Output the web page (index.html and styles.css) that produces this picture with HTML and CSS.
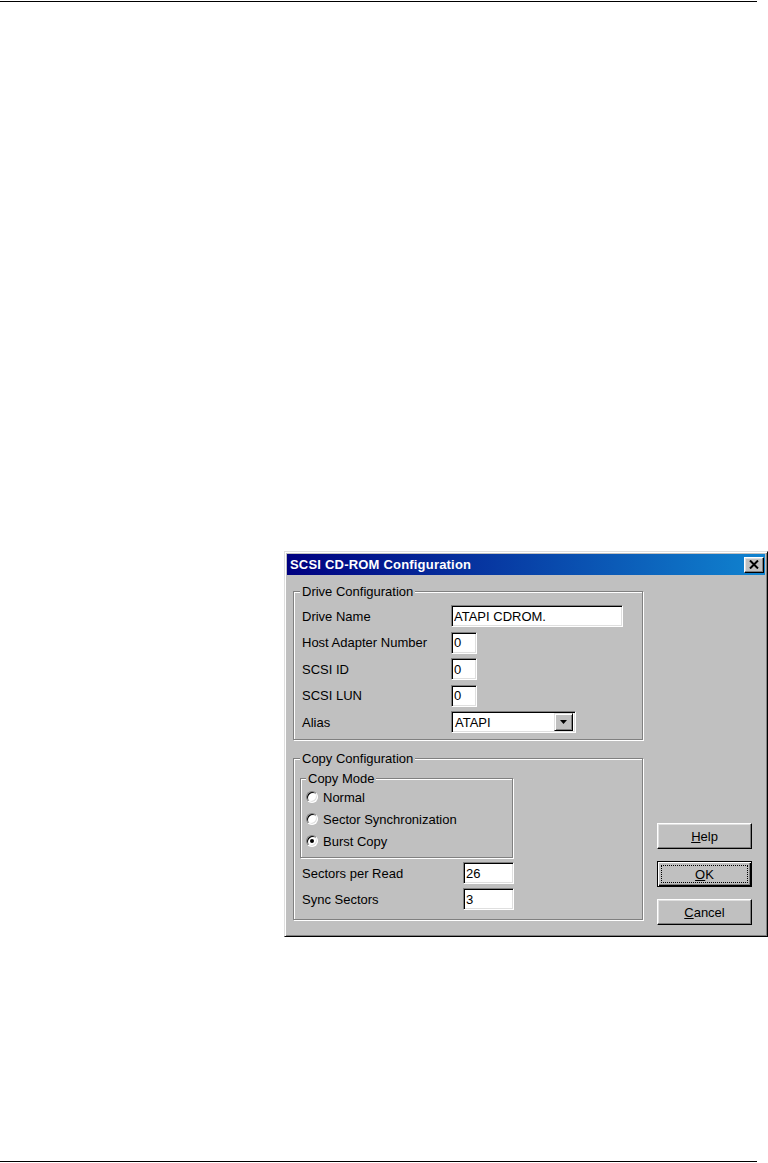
FILE: index.html
```html
<!DOCTYPE html>
<html lang="en-US">
<head>
<title>SCSI CD-ROM Configuration</title>
<link rel="stylesheet" href="styles.css">
</head>
<body>
<div class="page">
  <hr class="rule">

  <div class="dialog">
    <div class="titlebar">
      <span class="title">SCSI CD-ROM Configuration</span>
      <button class="close" type="button">
        <svg width="10" height="9" viewBox="0 0 10 9"><path d="M1 0.5 L9 8.5 M9 0.5 L1 8.5" stroke="#000" stroke-width="2" fill="none"/></svg>
      </button>
    </div>

    <div class="dialog-body">
      <div class="groups">
        <fieldset class="group drive">
          <legend>Drive Configuration</legend>
          <div class="rows">
            <div class="field"><label>Drive Name</label><input class="text" style="width:172px" value="ATAPI CDROM."></div>
            <div class="field"><label>Host Adapter Number</label><input class="text" style="width:26px" value="0"></div>
            <div class="field"><label>SCSI ID</label><input class="text" style="width:26px" value="0"></div>
            <div class="field"><label>SCSI LUN</label><input class="text" style="width:26px" value="0"></div>
            <div class="field">
              <label>Alias</label>
              <div class="combo">
                <span>ATAPI</span>
                <button class="combo-btn" type="button">
                  <svg width="7" height="4" viewBox="0 0 7 4"><polygon points="0,0 7,0 3.5,4" fill="#000"/></svg>
                </button>
              </div>
            </div>
          </div>
        </fieldset>

        <fieldset class="group copy">
          <legend>Copy Configuration</legend>
          <fieldset class="group mode">
            <legend>Copy Mode</legend>
            <div class="option"><span class="radio"></span>Normal</div>
            <div class="option"><span class="radio"></span>Sector Synchronization</div>
            <div class="option"><span class="radio checked"></span>Burst Copy</div>
          </fieldset>
          <div class="rows copy-rows">
            <div class="field"><label>Sectors per Read</label><input class="text" style="width:51px" value="26"></div>
            <div class="field"><label>Sync Sectors</label><input class="text" style="width:51px" value="3"></div>
          </div>
        </fieldset>
      </div>

      <div class="buttons">
        <button class="btn" type="button"><u>H</u>elp</button>
        <button class="btn default" type="button"><span class="focus"><u>O</u>K</span></button>
        <button class="btn" type="button"><u>C</u>ancel</button>
      </div>
    </div>
  </div>

  <hr class="rule">
</div>
</body>
</html>
```

FILE: styles.css
```css
html, body {
  margin: 0;
  background: #fff;
  overflow: hidden;
}
body {
  font-family: "Liberation Sans", Arial, sans-serif;
  font-size: 13px;
  color: #000;
}

.page {
  height: 1163px;
  display: flex;
  flex-direction: column;
}
.rule {
  width: 757px;
  height: 1px;
  margin: 1px 0 0 0;
  border: none;
  background: #000;
}
.rule:last-child {
  margin: auto 0 1px 0;
}

/* window */
.dialog {
  box-sizing: border-box;
  width: 484px;
  margin: 549px 0 0 284px;
  padding: 2px;
  background: #c0c0c0;
  border: 1px solid;
  border-color: #dfdfdf #000 #000 #dfdfdf;
  box-shadow: inset 1px 1px 0 #fff, inset -1px -1px 0 #808080;
}
.titlebar {
  height: 21px;
  display: flex;
  align-items: center;
  justify-content: space-between;
  padding: 0 1px 0 3px;
  background: linear-gradient(90deg, #000080, #1084d0);
}
.title {
  color: #fff;
  font-weight: bold;
  font-size: 13px;
  letter-spacing: 0.2px;
}
.close {
  width: 20px;
  height: 16px;
  padding: 0;
  display: flex;
  align-items: center;
  justify-content: center;
  background: #c0c0c0;
  border: 1px solid;
  border-color: #fff #000 #000 #fff;
  box-shadow: inset -1px -1px 0 #808080, inset 1px 1px 0 #dfdfdf;
}

.dialog-body {
  display: flex;
  align-items: flex-end;
  padding: 9px 13px 9px 6px;
}
.groups {
  width: 350px;
  margin: 0 14px 5px 0;
}

/* group boxes */
.group {
  box-sizing: border-box;
  min-width: 0;
  margin: 0;
  padding: 0;
  border: 1px solid #808080;
  box-shadow: 1px 1px 0 #fff, inset 1px 1px 0 #fff;
}
.group legend {
  margin-left: 6px;
  padding: 0 2px;
  line-height: 15px;
  background: #c0c0c0;
}
.drive {
  width: 350px;
}
.drive .rows {
  padding: 6px 0 6px 8px;
}
.copy {
  width: 350px;
  margin-top: 11px;
  padding: 5px 0 0 0;
}
.mode {
  width: 213px;
  margin-left: 6px;
  padding: 0 0 5px 5px;
}
.mode legend {
  margin-left: 0;
}
.copy-rows {
  padding: 4px 0 9px 8px;
}

.rows {
  display: flex;
  flex-direction: column;
  gap: 4.5px;
}
.copy-rows {
  gap: 4px;
}
.field {
  height: 22px;
  display: flex;
  align-items: center;
}
.field label {
  width: 149px;
  flex: none;
}
.copy-rows .field label {
  width: 161px;
}

/* inputs */
.text {
  box-sizing: border-box;
  height: 22px;
  margin: 0;
  padding: 0 2px;
  font: inherit;
  color: #000;
  background: #fff;
  border: 1px solid;
  border-color: #808080 #fff #fff #808080;
  box-shadow: inset 1px 1px 0 #000, inset -1px -1px 0 #dfdfdf;
  outline: none;
}
.combo {
  box-sizing: border-box;
  width: 125px;
  height: 22px;
  display: flex;
  align-items: center;
  justify-content: space-between;
  padding: 2px 2px 2px 3px;
  background: #fff;
  border: 1px solid;
  border-color: #808080 #fff #fff #808080;
  box-shadow: inset 1px 1px 0 #000, inset -1px -1px 0 #dfdfdf;
}
.combo-btn {
  width: 19px;
  height: 18px;
  padding: 0;
  display: flex;
  align-items: center;
  justify-content: center;
  background: #c0c0c0;
  border: 1px solid;
  border-color: #dfdfdf #000 #000 #dfdfdf;
  box-shadow: inset 1px 1px 0 #fff, inset -1px -1px 0 #808080;
}

/* radio buttons */
.option {
  height: 22px;
  display: flex;
  align-items: center;
  gap: 5px;
}
.radio {
  box-sizing: border-box;
  width: 12px;
  height: 12px;
  flex: none;
  display: flex;
  align-items: center;
  justify-content: center;
  border-radius: 50%;
  background: #fff;
  border: 1px solid;
  border-color: #808080 #fff #fff #808080;
  box-shadow: inset 1px 1px 0 #000, inset -1px -1px 0 #dfdfdf;
}
.radio.checked::after {
  content: "";
  width: 4px;
  height: 4px;
  border-radius: 50%;
  background: #000;
}

/* push buttons */
.buttons {
  width: 95px;
  display: flex;
  flex-direction: column;
  gap: 12px;
}
.btn {
  box-sizing: border-box;
  height: 26px;
  padding: 0;
  font: inherit;
  color: #000;
  background: #c0c0c0;
  border: 1px solid;
  border-color: #fff #000 #000 #fff;
  box-shadow: inset -1px -1px 0 #808080, inset 1px 1px 0 #dfdfdf;
}
.btn.default {
  border: 1px solid #000;
  box-shadow: inset 1px 1px 0 #fff, inset -1px -1px 0 #000, inset -2px -2px 0 #808080;
  padding: 3px;
  display: flex;
}
.btn .focus {
  flex: 1;
  display: flex;
  align-items: center;
  justify-content: center;
  border: 1px dotted #000;
}
```
